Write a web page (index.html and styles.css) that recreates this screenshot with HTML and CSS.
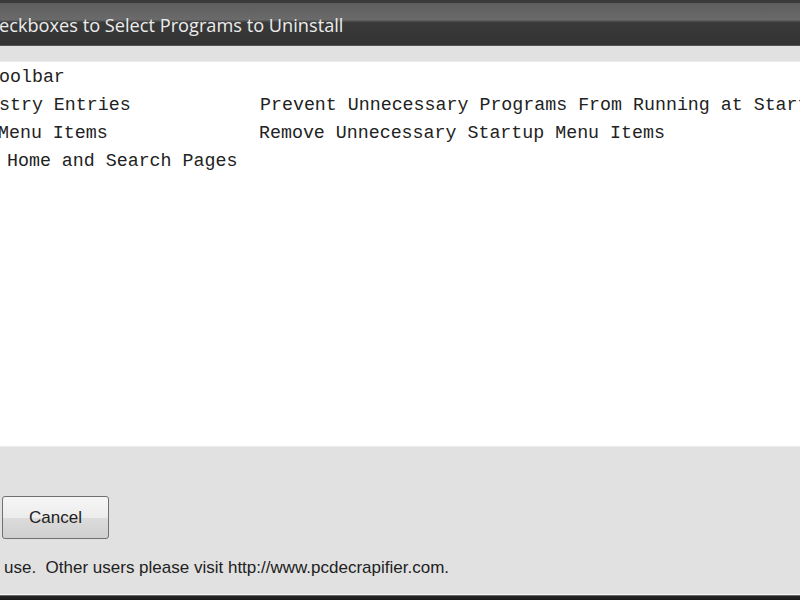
FILE: index.html
```html
<!DOCTYPE html>
<html>
<head>
<meta charset="utf-8">
<link rel="stylesheet" href="styles.css">
</head>
<body>
<div class="window">
  <div class="titlebar"><span class="title">eckboxes to Select Programs to Uninstall</span></div>
  <div class="strip"></div>
  <div class="list">
    <div class="row"><span class="c1 r1">oolbar</span></div>
    <div class="row"><span class="c1 r2">stry Entries</span><span class="c2">Prevent Unnecessary Programs From Running at Startup</span></div>
    <div class="row"><span class="c1 r3">Menu Items</span><span class="c2">Remove Unnecessary Startup Menu Items</span></div>
    <div class="row"><span class="c1 r4">Home and Search Pages</span></div>
  </div>
  <div class="bottom">
    <button class="btn">Cancel</button>
    <div class="note">use.&nbsp; Other users please visit http://www.pcdecrapifier.com.</div>
  </div>
  <div class="frame"></div>
</div>
</body>
</html>
```
FILE: styles.css
```css
html, body { margin: 0; padding: 0; }
body { width: 800px; height: 600px; overflow: hidden; background: #e1e1e1; }
.window { display: flex; flex-direction: column; height: 600px; }
.titlebar {
  height: 42px;
  border-top: 3px solid #3a3a3a;
  background: linear-gradient(#5e5e5e 0, #6a6a6a 40%, #3a3a3a 46%, #333 100%);
  display: flex; align-items: center;
  border-bottom: 1px solid #555;
  overflow: hidden;
}
.title {
  font-family: "Open Sans", "Noto Sans", sans-serif;
  font-size: 18.2px; color: #ececec; white-space: nowrap;
  margin-left: -1px; margin-top: 1px;
}
.strip { height: 15px; background: #e1e1e1; border-bottom: 1px solid #ececec; }
.list {
  height: 384px; background: #fff;
  padding-top: 1px; box-sizing: border-box;
  font-family: "Liberation Mono", "Courier New", monospace;
  font-size: 18.3px; color: #222;
}
.row { height: 28px; line-height: 28px; display: flex; white-space: nowrap; overflow: hidden; }
.c1 { width: 260px; flex: none; }
.c2 { margin-left: 1px; }
.r1 { margin-left: -1px; }
.r2 { margin-left: -1px; }
.r3 { margin-left: -2px; }
.r4 { margin-left: 7px; width: 253px; }
.bottom {
  flex: 1; background: #e1e1e1; border-top: 1px solid #ececec;
  display: flex; flex-direction: column; padding-top: 49px; padding-left: 2px;
  border-bottom: 1px solid #f4f4f4;
}
.btn {
  width: 107px; height: 43px; box-sizing: border-box;
  border: 1px solid #707070; border-radius: 3px;
  background: linear-gradient(#f6f6f6 0, #ececec 50%, #dcdcdc 51%, #cfcfcf 100%);
  font-family: "Liberation Sans", Arial, sans-serif; font-size: 17px; color: #222;
  padding: 0; margin: 0;
}
.note {
  font-family: "Liberation Sans", Arial, sans-serif; font-size: 17px; color: #222;
  margin-top: 19px; margin-left: 2px; white-space: nowrap;
}
.frame { height: 5px; background: linear-gradient(#888 0, #222 30%, #1a1a1a 100%); }
```
